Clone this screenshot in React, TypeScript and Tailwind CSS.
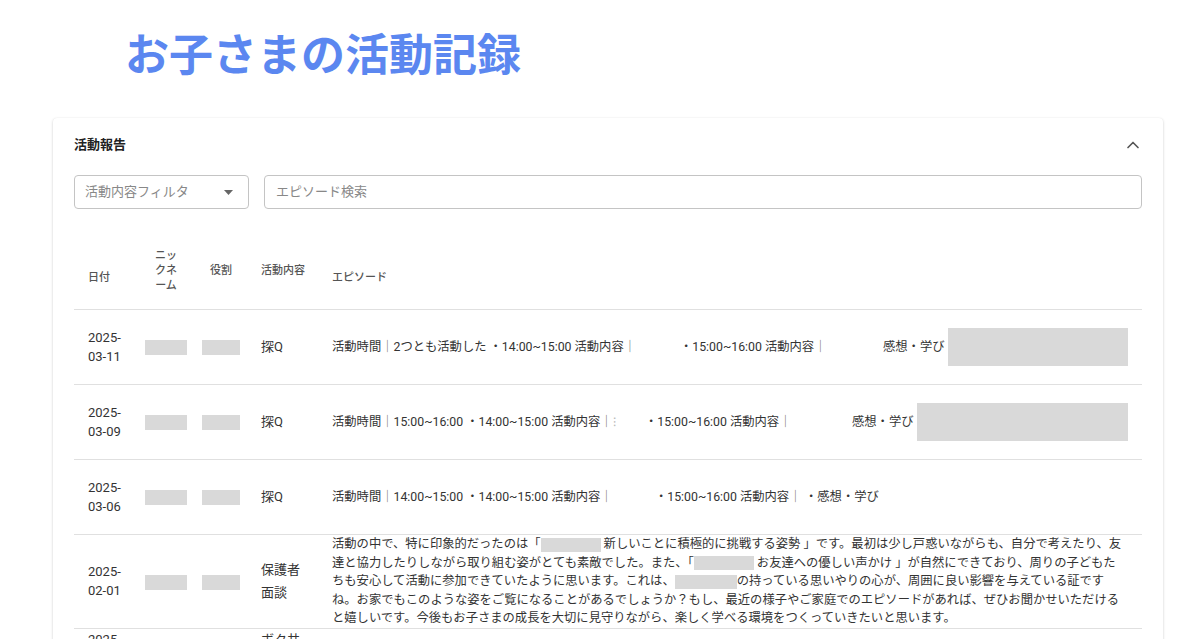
import { ChevronUp } from 'lucide-react';

const FONT = "font-['Roboto','Noto_Sans_CJK_JP',sans-serif]";

function Blank({ w, h = 'h-[15px]' }: { w: string; h?: string }) {
  return <span className={`inline-block align-middle bg-[#d9d9d9] ${w} ${h}`} />;
}

function Bar() {
  return <span className="text-[#666]">｜</span>;
}

function DateCell({ date }: { date: string }) {
  const [y, ...rest] = date.split('-');
  return (
    <td className="pl-[14px] pr-[14px] py-[18px] align-middle text-[13px] leading-[19px] text-[#333]">
      {y}-
      <br />
      {rest.join('-')}
    </td>
  );
}

function NameCells() {
  return (
    <>
      <td className="px-0 py-[18px] align-middle text-center">
        <span className="inline-block w-[42px] h-[15px] bg-[#d9d9d9] align-middle" />
      </td>
      <td className="px-0 py-[18px] align-middle text-center">
        <span className="inline-block w-[38px] h-[15px] bg-[#d9d9d9] align-middle" />
      </td>
    </>
  );
}

export default function App() {
  return (
    <div className={`${FONT} h-[639px] overflow-hidden bg-white px-[53px]`}>
      {/* Title */}
      <h1 className="ml-[72px] pt-[28px] text-[44px] leading-[56px] font-bold text-[#5b87f0]">
        お子さまの活動記録
      </h1>

      {/* Report card */}
      <div className="mt-[34px] w-[1110px] bg-white rounded-[4px] shadow-[0_1px_3px_rgba(0,0,0,0.18),0_0_1px_rgba(0,0,0,0.08)] px-[21px] pt-[17px] pb-6">
        <div className="flex items-center justify-between h-[20px]">
          <span className="text-[13px] font-bold text-[#222]">活動報告</span>
          <ChevronUp size={20} strokeWidth={2} className="text-[#555] mr-[-1px]" />
        </div>

        {/* Filters */}
        <div className="mt-[20px] flex gap-[15px]">
          <div className="w-[175px] h-[34px] shrink-0 flex items-center justify-between border border-[#c4c4c4] rounded-[4px] pl-[10px] pr-[15px]">
            <span className="text-[13px] text-[#888]">活動内容フィルタ</span>
            <svg width="9" height="5" viewBox="0 0 9 5">
              <path d="M0 0 L9 0 L4.5 5 Z" fill="#666" />
            </svg>
          </div>
          <div className="flex-1 h-[34px] flex items-center border border-[#c4c4c4] rounded-[4px] pl-[11px]">
            <span className="text-[13px] text-[#888]">エピソード検索</span>
          </div>
        </div>

        {/* Table */}
        <table className="mt-[23px] w-full table-fixed border-collapse">
          <colgroup>
            <col className="w-[64px]" />
            <col className="w-[56px]" />
            <col className="w-[54px]" />
            <col className="w-[70px]" />
            <col />
          </colgroup>
          <thead>
            <tr className="border-b border-[#e0e0e0] text-[11px] leading-[15px] text-[#555]">
              <th className="pl-[14px] pr-[14px] pt-[30px] pb-[16px] text-left align-middle font-medium">日付</th>
              <th className="px-[14px] py-[16px] text-center align-middle font-medium">ニックネーム</th>
              <th className="px-[14px] py-[16px] text-center align-middle font-medium">役割</th>
              <th className="pl-[13px] pr-[12px] py-[16px] text-left align-middle font-medium">活動内容</th>
              <th className="pl-[14px] pr-[14px] pt-[30px] pb-[16px] text-left align-middle font-medium">エピソード</th>
            </tr>
          </thead>
          <tbody className="text-[#333]">
            <tr className="border-b border-[#e0e0e0]">
              <DateCell date="2025-03-11" />
              <NameCells />
              <td className="pl-[13px] pr-[12px] align-middle text-[13px]">探Q</td>
              <td className="pl-[14px] pr-[14px] align-middle text-[12.3px]">
                <div className="flex items-center whitespace-nowrap">
                  <span className="w-[348px] shrink-0">活動時間<Bar />2つとも活動した ・14:00~15:00 活動内容<Bar /></span>
                  <span className="w-[203px] shrink-0">・15:00~16:00 活動内容<Bar /></span>
                  <span className="w-[65px] shrink-0">感想・学び</span>
                  <span className="w-[180px] h-[38px] shrink-0 bg-[#d9d9d9]" />
                </div>
              </td>
            </tr>
            <tr className="border-b border-[#e0e0e0]">
              <DateCell date="2025-03-09" />
              <NameCells />
              <td className="pl-[13px] pr-[12px] align-middle text-[13px]">探Q</td>
              <td className="pl-[14px] pr-[14px] align-middle text-[12.3px]">
                <div className="flex items-center whitespace-nowrap">
                  <span className="w-[313px] shrink-0">
                    活動時間<Bar />15:00~16:00 ・14:00~15:00 活動内容<Bar /><span className="text-[#bbb]">⁝</span>
                  </span>
                  <span className="w-[207px] shrink-0">・15:00~16:00 活動内容<Bar /></span>
                  <span className="w-[65px] shrink-0">感想・学び</span>
                  <span className="w-[211px] h-[38px] shrink-0 bg-[#d9d9d9]" />
                </div>
              </td>
            </tr>
            <tr className="border-b border-[#e0e0e0]">
              <DateCell date="2025-03-06" />
              <NameCells />
              <td className="pl-[13px] pr-[12px] align-middle text-[13px]">探Q</td>
              <td className="pl-[14px] pr-[14px] align-middle text-[12.3px]">
                <div className="flex items-center whitespace-nowrap h-[38px]">
                  <span className="w-[323px] shrink-0">活動時間<Bar />14:00~15:00 ・14:00~15:00 活動内容<Bar /></span>
                  <span className="w-[150px] shrink-0">・15:00~16:00 活動内容<Bar /></span>
                  <span className="shrink-0">・感想・学び</span>
                </div>
              </td>
            </tr>
            <tr className="border-b border-[#e0e0e0]">
              <DateCell date="2025-02-01" />
              <NameCells />
              <td className="pl-[13px] pr-[12px] align-middle text-[13px] leading-[23px]">保護者面談</td>
              <td className="pl-[14px] pr-[14px] py-0 align-middle text-[12.3px] leading-[18.6px] whitespace-nowrap">
                <div>
                  活動の中で、特に印象的だったのは「<Blank w="w-[60px]" h="h-[14px]" /> 新しいことに積極的に挑戦する姿勢 」です。最初は少し戸惑いながらも、自分で考えたり、友
                </div>
                <div>
                  達と協力したりしながら取り組む姿がとても素敵でした。また、「<Blank w="w-[60px]" h="h-[14px]" /> お友達への優しい声かけ 」が自然にできており、周りの子どもた
                </div>
                <div>
                  ちも安心して活動に参加できていたように思います。これは、<Blank w="w-[62px]" h="h-[14px]" />の持っている思いやりの心が、周囲に良い影響を与えている証です
                </div>
                <div>ね。お家でもこのような姿をご覧になることがあるでしょうか？もし、最近の様子やご家庭でのエピソードがあれば、ぜひお聞かせいただける</div>
                <div>と嬉しいです。今後もお子さまの成長を大切に見守りながら、楽しく学べる環境をつくっていきたいと思います。</div>
              </td>
            </tr>
            <tr>
              <td className="pl-[14px] pr-[14px] pt-[1px] align-top text-[13px] leading-[19px]">
                2025-
                <br />
                01-25
              </td>
              <td />
              <td />
              <td className="pl-[13px] pr-[12px] pt-[1px] align-top text-[13px] leading-[19px]">ボク共創</td>
              <td />
            </tr>
          </tbody>
        </table>
      </div>
    </div>
  );
}
